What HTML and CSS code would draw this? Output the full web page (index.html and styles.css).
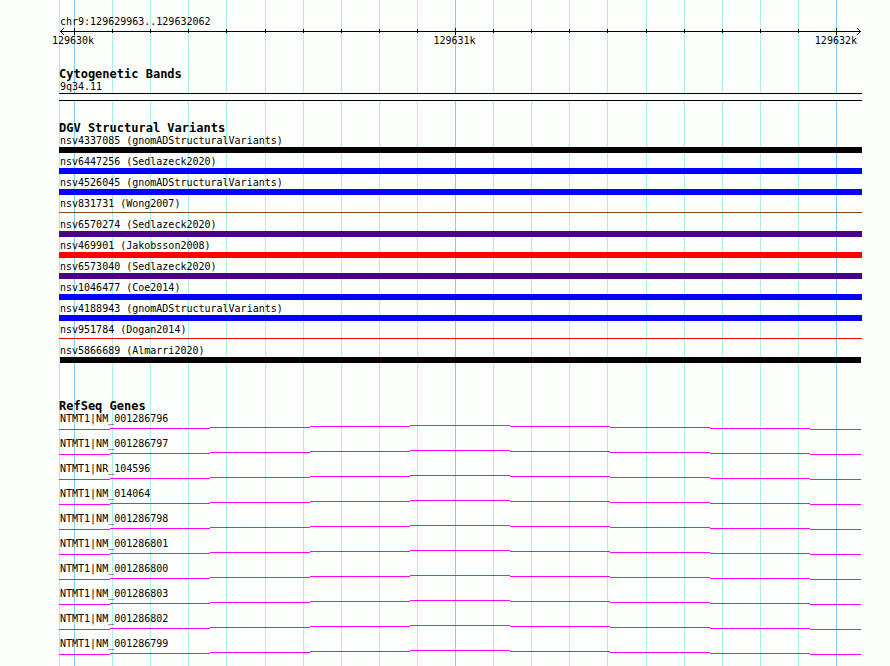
FILE: index.html
```
<!DOCTYPE html>
<html lang="en">
<head>
    <meta charset="UTF-8">
    <meta name="viewport" content="width=device-width, initial-scale=1.0">
    <title>chr9:129629963..129632062</title>
    <link rel="stylesheet" href="styles.css">
</head>
<body>
    <main class="browser">
        <!-- Grid lines behind the tracks -->
        <svg class="grid" viewBox="0 0 803 100" preserveAspectRatio="none" aria-hidden="true">
            <path class="minor" d="M0 0h1v100h-1zM53 0h1v100h-1zM91 0h1v100h-1zM129 0h1v100h-1zM167 0h1v100h-1zM206 0h1v100h-1zM244 0h1v100h-1zM282 0h1v100h-1zM320 0h1v100h-1zM358 0h1v100h-1zM434 0h1v100h-1zM472 0h1v100h-1zM510 0h1v100h-1zM548 0h1v100h-1zM587 0h1v100h-1zM625 0h1v100h-1zM663 0h1v100h-1zM701 0h1v100h-1zM739 0h1v100h-1z"/>
            <path class="major" d="M15 0h1v100h-1zM396 0h1v100h-1zM777 0h1v100h-1z"/>
        </svg>

        <!-- Scale -->
        <header class="scale">
            <div class="label">chr9:129629963..129632062</div>
            <svg class="axis" viewBox="0 0 803 7" preserveAspectRatio="none" aria-hidden="true">
                <path d="M1 3h801v1h-801z"/>
                <path d="M53 1h1v4h-1zM91 1h1v4h-1zM129 1h1v4h-1zM167 1h1v4h-1zM206 1h1v4h-1zM244 1h1v4h-1zM282 1h1v4h-1zM320 1h1v4h-1zM358 1h1v4h-1zM434 1h1v4h-1zM472 1h1v4h-1zM510 1h1v4h-1zM548 1h1v4h-1zM587 1h1v4h-1zM625 1h1v4h-1zM663 1h1v4h-1zM701 1h1v4h-1zM739 1h1v4h-1z"/>
                <path d="M15 0h1v7h-1zM396 0h1v7h-1zM777 0h1v7h-1z"/>
                <path d="M2 2h1v3h-1zM3 1h1v1h-1zM3 5h1v1h-1zM4 0h1v1h-1zM4 6h1v1h-1zM800 2h1v3h-1zM799 1h1v1h-1zM799 5h1v1h-1zM798 0h1v1h-1zM798 6h1v1h-1z"/>
            </svg>
            <div class="ticks">
                <span>129630k</span>
                <span>129631k</span>
                <span>129632k</span>
            </div>
        </header>

        <section class="track">
            <h2>Cytogenetic Bands</h2>
            <div class="label">9q34.11</div>
            <div class="band"></div>
        </section>

        <section class="track variants">
            <h2>DGV Structural Variants</h2>
            <div class="variant black">nsv4337085 (gnomADStructuralVariants)</div>
            <div class="variant blue">nsv6447256 (Sedlazeck2020)</div>
            <div class="variant blue">nsv4526045 (gnomADStructuralVariants)</div>
            <div class="variant brown thin">nsv831731 (Wong2007)</div>
            <div class="variant indigo">nsv6570274 (Sedlazeck2020)</div>
            <div class="variant red">nsv469901 (Jakobsson2008)</div>
            <div class="variant indigo">nsv6573040 (Sedlazeck2020)</div>
            <div class="variant blue">nsv1046477 (Coe2014)</div>
            <div class="variant blue">nsv4188943 (gnomADStructuralVariants)</div>
            <div class="variant red thin">nsv951784 (Dogan2014)</div>
            <div class="variant black inner">nsv5866689 (Almarri2020)</div>
        </section>

        <section class="track">
            <h2>RefSeq Genes</h2>
            <!-- Intron line shared by all transcripts -->
            <svg class="defs" aria-hidden="true">
                <symbol id="intron" viewBox="0 0 803 5" preserveAspectRatio="none">
                    <path d="M0 4h51v1h-51zM51 3h100v1h-100zM151 2h100v1h-100zM251 1h100v1h-100zM351 0h100v1h-100zM451 1h100v1h-100zM551 2h100v1h-100zM651 3h100v1h-100zM751 4h51v1h-51z"/>
                </symbol>
            </svg>
            <div class="gene">NTMT1|NM_001286796<svg class="intron"><use href="#intron"/></svg></div>
            <div class="gene">NTMT1|NM_001286797<svg class="intron"><use href="#intron"/></svg></div>
            <div class="gene">NTMT1|NR_104596<svg class="intron"><use href="#intron"/></svg></div>
            <div class="gene">NTMT1|NM_014064<svg class="intron"><use href="#intron"/></svg></div>
            <div class="gene">NTMT1|NM_001286798<svg class="intron"><use href="#intron"/></svg></div>
            <div class="gene">NTMT1|NM_001286801<svg class="intron"><use href="#intron"/></svg></div>
            <div class="gene">NTMT1|NM_001286800<svg class="intron"><use href="#intron"/></svg></div>
            <div class="gene">NTMT1|NM_001286803<svg class="intron"><use href="#intron"/></svg></div>
            <div class="gene">NTMT1|NM_001286802<svg class="intron"><use href="#intron"/></svg></div>
            <div class="gene">NTMT1|NM_001286799<svg class="intron"><use href="#intron"/></svg></div>
        </section>
    </main>
</body>
</html>
```
FILE: styles.css
```
/* General Styles */
* {
    box-sizing: border-box;
}

body {
    margin: 0;
    background-color: #fcfefc;
    color: #000;
    font-family: "DejaVu Sans Mono", monospace;
    font-size: 10px;
    line-height: 12px;
}

.browser {
    position: relative;
    z-index: 0;
    min-height: 100vh;
    margin: 0 28px 0 59px;
    padding-top: 16px;
}

svg {
    display: block;
    width: 100%;
    shape-rendering: crispEdges;
}

/* Grid */
.grid {
    position: absolute;
    top: 0;
    left: 0;
    height: 100%;
    z-index: -1;
}

.minor {
    fill: #aceeec;
}

.major {
    fill: #84ceec;
}

/* Scale */
.axis {
    height: 7px;
}

.ticks {
    display: flex;
    justify-content: space-between;
    margin: 0 5px 0 -7px;
}

.label {
    padding-left: 1px;
}

/* Tracks */
.track {
    margin-top: 20px;
}

.track h2 {
    margin: 0;
    font-size: 12px;
    line-height: 14px;
    font-weight: bold;
}

.band {
    height: 8px;
    border-top: 1px solid #000;
    border-bottom: 1px solid #000;
    background-color: #fcfefc;
}

/* Variants */
.variants {
    margin-bottom: 33px;
}

.variant {
    height: 21px;
    text-indent: 1px;
}

.variant::after {
    content: '';
    display: block;
    height: 6px;
    background-color: var(--bar);
}

.variant.thin::after {
    height: 1px;
    margin-top: 2px;
}

.variant.inner::after {
    margin: 0 1px;
}

.black {
    --bar: #040204;
}

.blue {
    --bar: #0402fc;
}

.brown {
    --bar: #8c4614;
}

.indigo {
    --bar: #4c0284;
}

.red {
    --bar: #fc0204;
}

/* Genes */
.gene {
    padding-bottom: 8px;
    text-indent: 1px;
}

.intron {
    height: 5px;
    fill: #fc02fc;
}

.defs {
    position: absolute;
    width: 0;
    height: 0;
}
```
